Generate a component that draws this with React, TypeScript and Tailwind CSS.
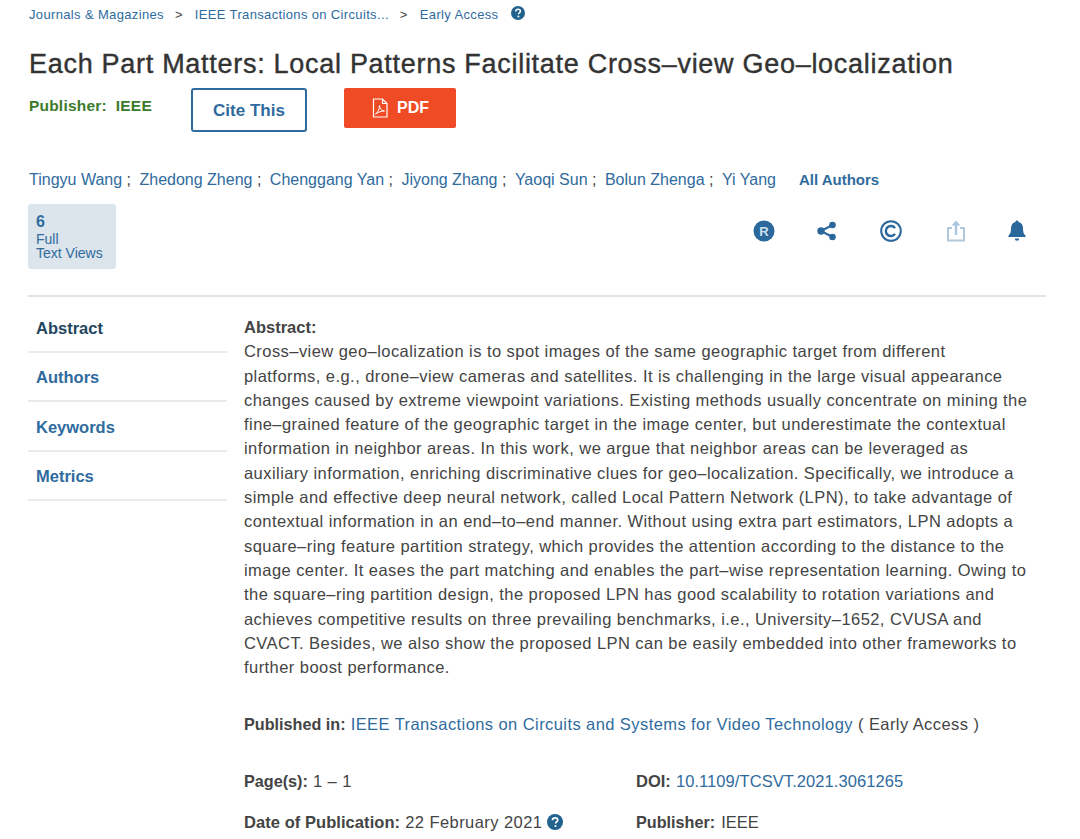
import React from "react";

const blue = "text-[#2f6b9e]";

function Help({ size = 14 }: { size?: number }) {
  return (
    <svg width={size} height={size} viewBox="0 0 16 16" className="shrink-0">
      <circle cx="8" cy="8" r="8" fill="#22628f" />
      <path d="M5.4 6.2C5.5 4.7 6.6 3.8 8.1 3.8c1.5 0 2.6.9 2.6 2.2 0 1-.6 1.5-1.3 2-.6.4-.8.7-.8 1.4" fill="none" stroke="#fff" strokeWidth="1.7" />
      <circle cx="8.5" cy="12" r="1.1" fill="#fff" />
    </svg>
  );
}

const abstractLines = [
  "Cross–view geo–localization is to spot images of the same geographic target from different",
  "platforms, e.g., drone–view cameras and satellites. It is challenging in the large visual appearance",
  "changes caused by extreme viewpoint variations. Existing methods usually concentrate on mining the",
  "fine–grained feature of the geographic target in the image center, but underestimate the contextual",
  "information in neighbor areas. In this work, we argue that neighbor areas can be leveraged as",
  "auxiliary information, enriching discriminative clues for geo–localization. Specifically, we introduce a",
  "simple and effective deep neural network, called Local Pattern Network (LPN), to take advantage of",
  "contextual information in an end–to–end manner. Without using extra part estimators, LPN adopts a",
  "square–ring feature partition strategy, which provides the attention according to the distance to the",
  "image center. It eases the part matching and enables the part–wise representation learning. Owing to",
  "the square–ring partition design, the proposed LPN has good scalability to rotation variations and",
  "achieves competitive results on three prevailing benchmarks, i.e., University–1652, CVUSA and",
  "CVACT. Besides, we also show the proposed LPN can be easily embedded into other frameworks to",
  "further boost performance.",
];

const authors = ["Tingyu Wang", "Zhedong Zheng", "Chenggang Yan", "Jiyong Zhang", "Yaoqi Sun", "Bolun Zhenga", "Yi Yang"];
const nav = ["Abstract", "Authors", "Keywords", "Metrics"];

export default function App() {
  return (
    <div className="h-[839px] w-[1080px] overflow-hidden bg-white pl-[28px] pr-[34px] font-['Liberation_Sans',Arial,sans-serif] text-[#444]">
      <div className={`flex h-[28px] items-center pl-px pt-px text-[13px] tracking-[0.35px] ${blue}`}>
        <span>Journals &amp; Magazines</span>
        <span className="ml-[11px] text-[#444]">&gt;</span>
        <span className="ml-[12px]">IEEE Transactions on Circuits...</span>
        <span className="ml-[11px] text-[#444]">&gt;</span>
        <span className="ml-[12px]">Early Access</span>
        <span className="-mt-[3px] ml-[13px]"><Help /></span>
      </div>

      <h1 className="mt-[18px] pl-px text-[27px] font-normal leading-[36px] tracking-[0.71px] text-[#333] [-webkit-text-stroke:0.4px_#333]">
        Each Part Matters: Local Patterns Facilitate Cross–view Geo–localization
      </h1>

      <div className="mt-[6px] flex items-start">
        <div className="mt-[8px] w-[124px] whitespace-nowrap pl-px text-[15.500px] font-bold leading-[20px] tracking-[0.2px] text-[#3b7a2a]">
          Publisher:&nbsp; IEEE
        </div>
        <div className={`ml-[39px] flex h-[44px] w-[116px] items-center justify-center rounded-[3px] border-2 border-[#2f6b9e] pt-px text-[17px] font-bold ${blue}`}>
          Cite This
        </div>
        <div className="ml-[37px] flex h-[40px] w-[112px] items-center justify-center gap-[8px] rounded-[2px] bg-[#ef4b25] text-[16px] font-bold text-white">
          <svg width="18" height="20" viewBox="0 0 18 20" fill="none" stroke="#fff" strokeWidth="1.2">
            <path d="M2.5 1h9l4.5 4.5V19h-13.500z" />
            <path d="M11.500 1v4.500H16" />
            <path d="M4.500 16c2-1 4-5 4-8.500 0 3 2 5.500 5 5.500-3 0-6 1-9 3z" strokeWidth="1" />
          </svg>
          PDF
        </div>
      </div>

      <div className={`mt-[37px] flex h-[22px] items-center pl-px text-[16px] ${blue}`}>
        {authors.map((a, i) => (
          <span key={a} className="mr-[8.500px]">
            {a}
            {i < authors.length - 1 && <span className="text-[#444]"> ;</span>}
          </span>
        ))}
        <span className="ml-[14.500px] text-[15px] font-bold">All Authors</span>
      </div>

      <div className="mt-[13px] flex items-center">
        <div className={`h-[65px] w-[88px] rounded-[3px] bg-[#dce5eb] pl-[8px] pt-[7px] text-[14px] leading-[14px] ${blue}`}>
          <div className="text-[16px] font-bold leading-[21px]">6</div>
          <div>Full</div>
          <div>Text Views</div>
        </div>
        <div className="ml-auto mr-[19px] flex items-center gap-[42px] pb-[11px]">
          <svg width="22" height="22" viewBox="0 0 22 22">
            <circle cx="11" cy="11" r="10.500" fill="#2a689b" />
            <text x="11" y="15.500" textAnchor="middle" fontSize="13" fontWeight="700" fill="#cfe0ec" fontFamily="Liberation Sans">R</text>
          </svg>
          <svg width="22" height="22" viewBox="0 0 22 22" className="-ml-[1px]" fill="#2a689b">
            <circle cx="5" cy="11" r="3.700" />
            <circle cx="16.500" cy="5" r="3.300" />
            <circle cx="16.500" cy="17" r="3.300" />
            <path d="M5 11 16.500 5M5 11l11.500 6" stroke="#2a689b" strokeWidth="2" />
          </svg>
          <svg width="24" height="24" viewBox="0 0 24 24" fill="none" stroke="#2a689b" className="-ml-[1px]">
            <circle cx="12" cy="12" r="9.800" strokeWidth="2" />
            <path d="M16 9.200A5 5 0 1 0 16 14.800" strokeWidth="2.400" />
          </svg>
          <svg width="20" height="24" viewBox="0 0 20 24" fill="none" className="ml-[1px]">
            <path d="M6 9H2v12.500h16V9h-4" stroke="#b3c7d8" strokeWidth="2" />
            <path d="M10 16V4" stroke="#a9c7e0" strokeWidth="2.400" />
            <path d="M5.500 6.500 10 1.500l4.500 5z" fill="#a9c7e0" />
          </svg>
          <svg width="20" height="24" viewBox="0 0 20 24" fill="#2a689b" className="-ml-[1px]">
            <path d="M10 1.500c.9 0 1.500.6 1.500 1.400 3 .7 4.500 3.200 4.500 6.100 0 4 .6 6 2.500 7.500V18h-17v-1.500C3.400 15 4 13 4 9c0-2.900 1.500-5.400 4.500-6.100 0-.8.600-1.400 1.500-1.400z" />
            <path d="M7.800 19.500h4.400a2.200 2.200 0 0 1-4.400 0z" />
          </svg>
        </div>
      </div>

      <div className="mt-[26px] h-[2px] bg-[#e2e3e4]" />

      <div className="flex">
        <nav className="mt-[6px] w-[199px] shrink-0 text-[16.500px] font-bold">
          {nav.map((n, i) => (
            <div
              key={n}
              className={`flex h-[49.500px] items-center border-b-2 border-[#eaebec] pl-[8px] pt-[3px] ${i === 0 ? "text-[#24465e]" : blue}`}
            >
              {n}
            </div>
          ))}
        </nav>

        <main className="ml-[17px] mt-[18px] min-w-0 flex-1 text-[16.500px] leading-[24.300px]">
          <div className="font-bold">Abstract:</div>
          <div className="whitespace-nowrap tracking-[0.44px]">
            {abstractLines.map((l) => (
              <div key={l}>{l}</div>
            ))}
          </div>

          <div className="mt-[33px] whitespace-nowrap tracking-[0.42px]">
            <b className="text-[16.200px] tracking-normal">Published in:</b>{" "}
            <span className={blue}>IEEE Transactions on Circuits and Systems for Video Technology</span> ( Early Access )
          </div>

          <div className="mt-[32px] grid grid-cols-[392px_1fr] tracking-[0.44px]">
            <div><b className="text-[16.200px] tracking-normal">Page(s):</b> 1 – 1</div>
            <div>
              <b className="tracking-normal">DOI:</b>{" "}
              <span className={`tracking-[0.08px] ${blue}`}>10.1109/TCSVT.2021.3061265</span>
            </div>
          </div>
          <div className="mt-[17px] grid grid-cols-[392px_1fr] tracking-[0.44px]">
            <div className="flex items-center gap-[5px]">
              <span><b className="tracking-[0.06px]">Date of Publication:</b> 22 February 2021</span>
              <Help size={16} />
            </div>
            <div className="tracking-normal"><b className="text-[16.200px]">Publisher:</b><span className="ml-[6px]">IEEE</span></div>
          </div>
        </main>
      </div>
    </div>
  );
}
